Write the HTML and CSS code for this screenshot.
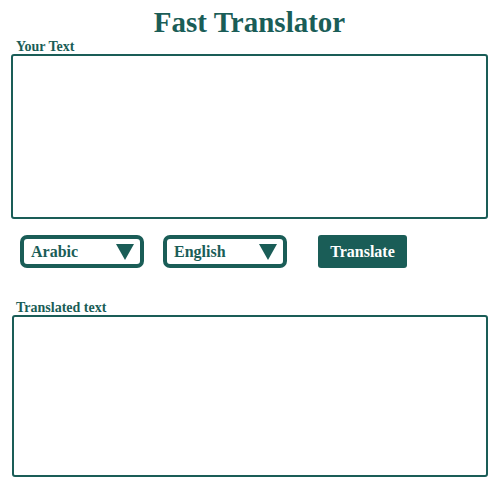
FILE: index.html
```html
<!DOCTYPE html>
<html lang="en">
<head>
    <meta charset="UTF-8">
    <meta name="viewport" content="width=device-width, initial-scale=1.0">
    <title>Fast Translator</title>
    <link rel="stylesheet" href="styles.css">
</head>
<body>
    <div class="container">
        <h1>Fast Translator</h1>
        <label for="source" class="field-label">Your Text</label>
        <textarea id="source" class="text-box source-box"></textarea>

        <div class="controls">
            <div class="lang-select">
                <span>Arabic</span>
                <span class="arrow"></span>
            </div>
            <div class="lang-select">
                <span>English</span>
                <span class="arrow"></span>
            </div>
            <button type="button" class="translate-btn">Translate</button>
        </div>

        <label for="result" class="field-label">Translated text</label>
        <textarea id="result" class="text-box result-box"></textarea>
    </div>
</body>
</html>
```

FILE: styles.css
```css
body {
    margin: 0;
    background-color: #ffffff;
    font-family: "Liberation Serif", "DejaVu Serif", serif;
    color: #1a5d57;
}

.container {
    padding: 0 12px 0 11px;
}

h1 {
    margin: 0;
    padding-top: 5px;
    text-align: center;
    font-size: 29px;
    font-weight: bold;
    line-height: 35px;
}

.field-label {
    display: block;
    padding-left: 5px;
    font-size: 14px;
    font-weight: bold;
    line-height: 14px;
}

.text-box {
    display: block;
    box-sizing: border-box;
    width: 100%;
    margin: 0;
    border: 2px solid #1a5d57;
    border-radius: 3px;
    resize: none;
    background: #fff;
}

.source-box {
    height: 165px;
}

.result-box {
    height: 162px;
    margin-left: 1px;
    width: 476px;
}

.controls {
    display: flex;
    align-items: center;
    padding: 16px 0 0 9px;
    height: 33px;
    margin-bottom: 33px;
}

.lang-select {
    box-sizing: border-box;
    width: 124px;
    height: 33px;
    border: 4px solid #1a5d57;
    border-radius: 7px;
    display: flex;
    align-items: center;
    justify-content: space-between;
    padding: 0 6px 0 7px;
    font-size: 16px;
    font-weight: bold;
    margin-right: 19px;
}

.arrow {
    width: 0;
    height: 0;
    border-left: 9px solid transparent;
    border-right: 9px solid transparent;
    border-top: 16px solid #1a5d57;
}

.translate-btn {
    margin-left: 12px;
    width: 89px;
    height: 33px;
    border: none;
    border-radius: 3px;
    background-color: #1a5d57;
    color: #ffffff;
    font-family: inherit;
    font-size: 16px;
    font-weight: bold;
    cursor: pointer;
}
```
